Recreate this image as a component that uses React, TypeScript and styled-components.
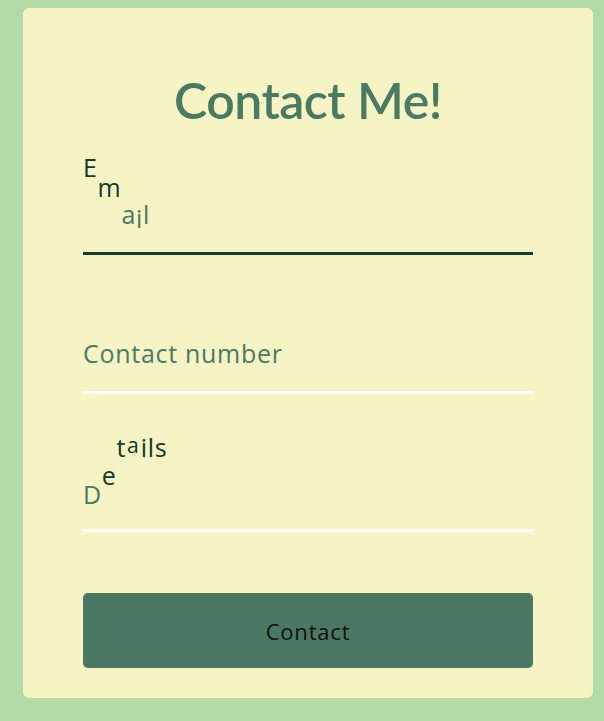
import React from "react";
import styled, { createGlobalStyle } from "styled-components";

const Global = createGlobalStyle`
  html, body { margin: 0; padding: 0; background: #b3dba8; }
  body { font-family: "Open Sans", "Lato", sans-serif; }
  * { box-sizing: border-box; }
`;

const Page = styled.div`
  min-height: 721px;
  padding: 8px 0 0 23px;
  background: #b3dba8;
`;

const Card = styled.div`
  width: 570px;
  height: 690px;
  background: #f6f3c5;
  border-radius: 6px;
  padding: 66px 60px 30px;
  display: flex;
  flex-direction: column;
`;

const Title = styled.h1`
  margin: 0;
  font-family: "Lato", "Open Sans", sans-serif;
  font-size: 50px;
  line-height: 52px;
  letter-spacing: -0.5px;
  font-weight: 600;
  text-align: center;
  color: #4a7a62;
`;

const Form = styled.form`
  display: flex;
  flex-direction: column;
`;

const Field = styled.div<{ $h: number }>`
  position: relative;
  height: ${(p) => p.$h}px;
  display: flex;
  flex-direction: column;
  justify-content: flex-end;
`;

const Input = styled.input<{ $active?: boolean }>`
  width: 100%;
  height: 50px;
  padding: 0;
  background: transparent;
  border: none;
  border-bottom: 3px solid ${(p) => (p.$active ? "#12392a" : "#ffffff")};
  outline: none;
  font: inherit;
`;

const Label = styled.label<{ $bottom: number }>`
  position: absolute;
  left: 0;
  bottom: ${(p) => p.$bottom}px;
  font-size: 25px;
  line-height: 25px;
  letter-spacing: 0.7px;
  white-space: nowrap;
  pointer-events: none;
`;

const Letter = styled.span<{ $lift: number; $dark?: boolean; $scale?: number; $drop?: number }>`
  display: inline-block;
  color: ${(p) => (p.$dark ? "#12392a" : "#4a7a62")};
  transform: translateY(${(p) => -p.$lift + (p.$drop || 0)}px) scale(${(p) => p.$scale || 1});
  transform-origin: center bottom;
`;

const Button = styled.button`
  margin-top: 61px;
  height: 75px;
  width: 100%;
  border: none;
  border-radius: 5px;
  background: #4a7862;
  color: #111;
  font-family: inherit;
  font-size: 22px;
  letter-spacing: 0.8px;
`;

type L = { ch: string; lift: number; dark?: boolean; scale?: number; drop?: number };

const WaveLabel = ({ letters, bottom }: { letters: L[]; bottom: number }) => (
  <Label $bottom={bottom}>
    {letters.map((l, i) => (
      <Letter key={i} $lift={l.lift} $dark={l.dark} $scale={l.scale} $drop={l.drop}>
        {l.ch}
      </Letter>
    ))}
  </Label>
);

const emailLetters: L[] = [
  { ch: "E", lift: 47, dark: true },
  { ch: "m", lift: 27, dark: true },
  { ch: "a", lift: 0 },
  { ch: "i", lift: 0, drop: 4 },
  { ch: "l", lift: 0 },
];

const numberLetters: L[] = "Contact number".split("").map((ch) => ({ ch: ch === " " ? "\u00a0" : ch, lift: 0 }));

const detailLetters: L[] = [
  { ch: "D", lift: 0 },
  { ch: "e", lift: 19, dark: true },
  { ch: "t", lift: 47, dark: true },
  { ch: "a", lift: 51, dark: true, scale: 0.85 },
  { ch: "i", lift: 47, dark: true },
  { ch: "l", lift: 47, dark: true },
  { ch: "s", lift: 47, dark: true },
];

export default function App() {
  return (
    <Page>
      <Global />
      <Card>
        <Title>Contact Me!</Title>
        <Form onSubmit={(e) => e.preventDefault()}>
          <Field $h={129}>
            <Input type="email" $active />
            <WaveLabel letters={emailLetters} bottom={28} />
          </Field>
          <Field $h={139}>
            <Input type="tel" />
            <WaveLabel letters={numberLetters} bottom={28} />
          </Field>
          <Field $h={138}>
            <Input type="text" />
            <WaveLabel letters={detailLetters} bottom={25} />
          </Field>
          <Button type="submit">Contact</Button>
        </Form>
      </Card>
    </Page>
  );
}
